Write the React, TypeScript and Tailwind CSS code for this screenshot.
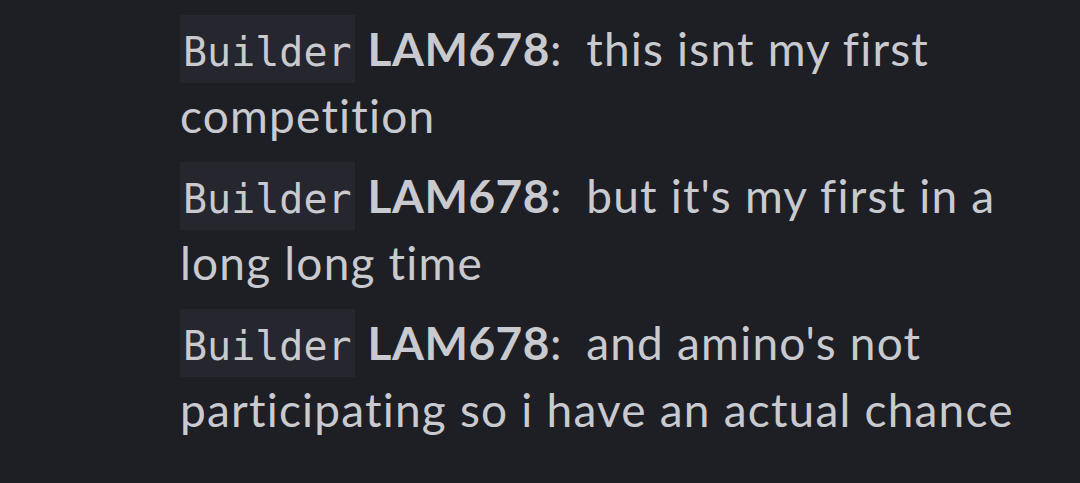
import * as React from "react"

const messages = [
  { role: "Builder", name: "LAM678", text: "this isnt my first competition" },
  { role: "Builder", name: "LAM678", text: "but it's my first in a long long time" },
  { role: "Builder", name: "LAM678", text: "and amino's not participating so i have an actual chance" },
]

export default function App() {
  return (
    <div className="w-[1080px] h-[483px] overflow-hidden bg-[#1e1f24] text-[#c9cacf] pl-[180px] pr-[50px] pt-[15px] font-['Lato',sans-serif] [font-variant-ligatures:none]">
      <div className="flex flex-col gap-[13px]">
        {messages.map((m, i) => (
          <p key={i} className="text-[46px] leading-[67px] tracking-[1.2px]">
            <span className="bg-[#26272e] px-[3px] pt-[14px] pb-[8px] font-['DejaVu_Sans_Mono',monospace] text-[40px] leading-none tracking-normal">
              {m.role}
            </span>{" "}
            <span className="font-bold tracking-[0.5px]">{m.name}</span>:
            <span className="tracking-normal">{"\u00a0 "}</span>
            {m.text}
          </p>
        ))}
      </div>
    </div>
  )
}
